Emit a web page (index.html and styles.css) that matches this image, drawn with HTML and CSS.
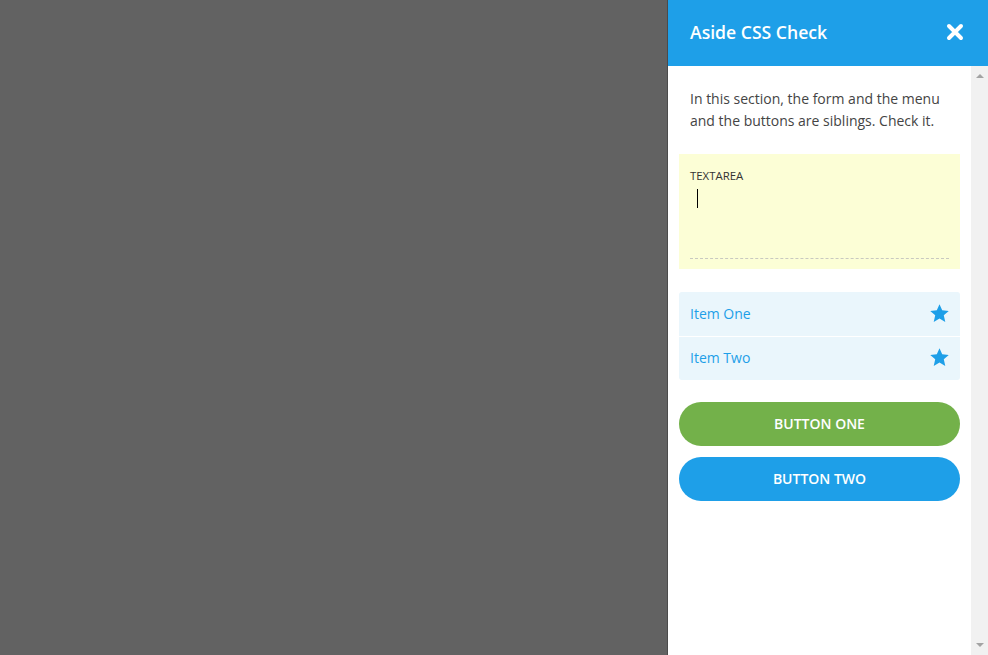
FILE: index.html
```html
<!DOCTYPE html>
<html>
<head>
<meta charset="utf-8">
<link rel="stylesheet" href="styles.css">
</head>
<body>
<div class="page">
  <div class="backdrop"></div>
  <aside class="aside">
    <header class="aside-head">
      <h1 class="aside-title">Aside CSS Check</h1>
      <svg class="close" width="18" height="18" viewBox="0 0 18 18"><path d="M3 3 L15 15 M15 3 L3 15" stroke="#fff" stroke-width="4" stroke-linecap="round"/></svg>
    </header>
    <div class="aside-body">
      <div class="content">
        <p class="intro">In this section, the form and the menu and the buttons are siblings. Check it.</p>
        <div class="field">
          <div class="field-label">TEXTAREA</div>
          <div class="field-input"><span class="caret"></span></div>
        </div>
        <ul class="menu">
          <li class="menu-item"><span>Item One</span><svg class="star" width="21" height="21" viewBox="0 0 24 24"><path d="M12 1.5l3.1 6.9 7.5.7-5.7 5 1.7 7.5L12 17.7l-6.6 3.9 1.7-7.5-5.7-5 7.5-.7z" fill="#1e9fe8"/></svg></li>
          <li class="menu-item"><span>Item Two</span><svg class="star" width="21" height="21" viewBox="0 0 24 24"><path d="M12 1.5l3.1 6.9 7.5.7-5.7 5 1.7 7.5L12 17.7l-6.6 3.9 1.7-7.5-5.7-5 7.5-.7z" fill="#1e9fe8"/></svg></li>
        </ul>
        <div class="buttons">
          <button class="btn btn-green">BUTTON ONE</button>
          <button class="btn btn-blue">BUTTON TWO</button>
        </div>
      </div>
      <div class="scrollbar">
        <span class="arrow up"></span>
        <span class="arrow down"></span>
      </div>
    </div>
  </aside>
</div>
</body>
</html>
```
FILE: styles.css
```css
* { box-sizing: border-box; }
html, body { margin: 0; padding: 0; }
body { font-family: "Open Sans", "Liberation Sans", sans-serif; overflow: hidden; }
.page { display: flex; width: 988px; height: 655px; }
.backdrop { width: 667px; background: #626262; }
.aside { width: 321px; border-left: 1px solid #4b4b4b; background: #fff; display: flex; flex-direction: column; }
.aside-head { height: 66px; background: #1e9fe8; display: flex; align-items: center; justify-content: space-between; padding: 0 24px 2px 22px; flex-shrink: 0; }
.aside-title { margin: 0; color: #fff; font-size: 17.6px; font-weight: 600; }
.close { display: block; }
.aside-body { flex: 1; display: flex; }
.content { flex: 1; padding: 22px 11px 0; }
.intro { margin: 0 0 22px; padding: 0 11px; font-size: 14px; line-height: 22px; color: #444; }
.field { background: #fcfed6; height: 115px; padding: 15px 11px 0; display: flex; flex-direction: column; }
.field-label { font-size: 11.4px; line-height: 14px; color: #333; }
.field-input { height: 76px; border-bottom: 1px dashed #c9c9c0; padding: 6px 0 0 7px; }
.caret { display: block; width: 1px; height: 19px; background: #000; }
.menu { list-style: none; margin: 23px 0 0; padding: 0; border-radius: 3px; overflow: hidden; }
.menu-item { height: 44px; background: #eaf6fc; display: flex; align-items: center; justify-content: space-between; padding: 0 11px 2px 11px; font-size: 14px; color: #1e9fe8; }
.menu-item + .menu-item { border-top: 1px solid #fff; }
.star { margin-right: -1px; }
.buttons { margin-top: 22px; display: flex; flex-direction: column; gap: 11px; }
.btn { height: 44px; border: 0; border-radius: 22px; color: #fff; font-family: "Open Sans", "Liberation Sans", sans-serif; font-size: 14px; font-weight: 600; width: 100%; padding: 0 0 2px; }
.btn-green { background: #73b14a; }
.btn-blue { background: #1e9fe8; }
.scrollbar { width: 17px; background: #f1f1f1; display: flex; flex-direction: column; justify-content: space-between; align-items: center; padding: 8px 0; }
.arrow { width: 0; height: 0; border-left: 4px solid transparent; border-right: 4px solid transparent; }
.arrow.up { border-bottom: 4px solid #a3a3a3; }
.arrow.down { border-top: 4px solid #a3a3a3; }
```
